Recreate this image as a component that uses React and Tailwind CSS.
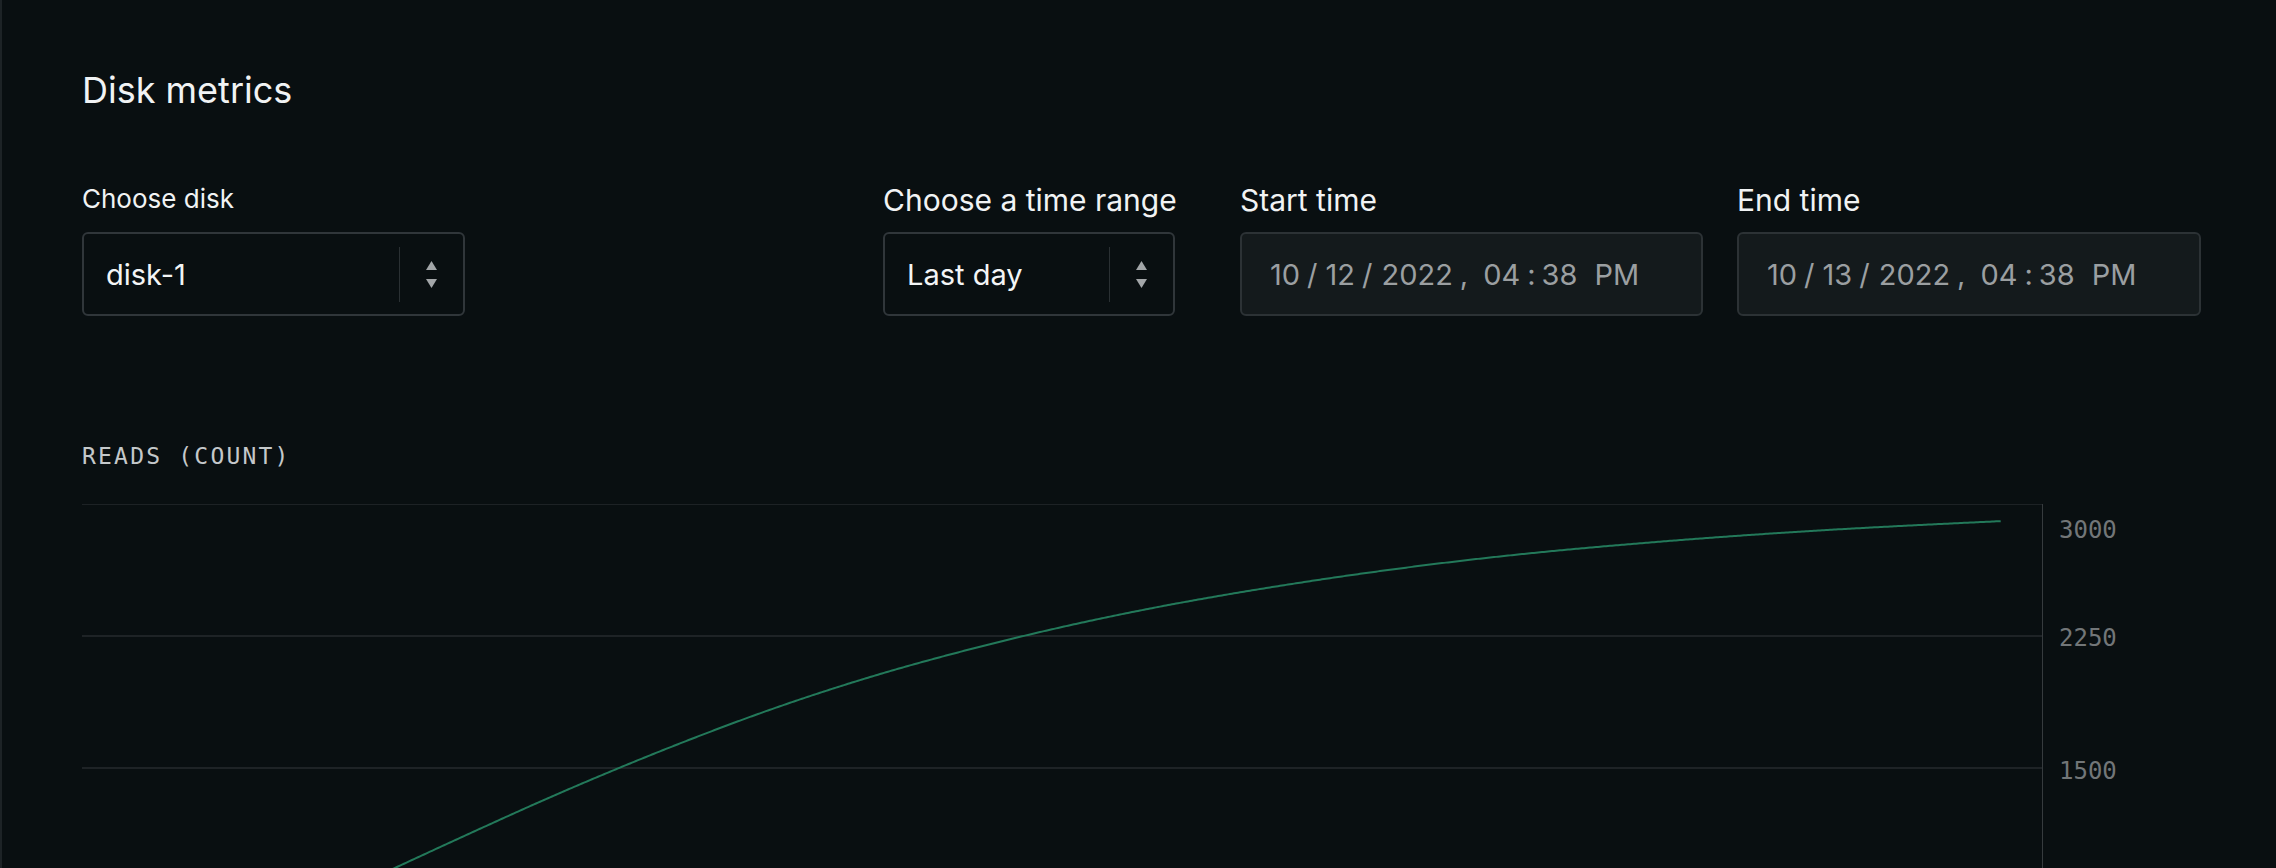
import React from "react";

// slope knots (local x, dy/dx) for the reads curve
const SLOPES = [
  [150, -0.48],
  [422, -0.454],
  [640, -0.377],
  [840, -0.275],
  [1118, -0.177],
  [1494, -0.091],
  [1802, -0.052],
  [1930, -0.045],
];

function slopeAt(x) {
  for (let i = 0; i < SLOPES.length - 1; i++) {
    const [x0, s0] = SLOPES[i];
    const [x1, s1] = SLOPES[i + 1];
    if (x <= x1) return s0 + ((x - x0) / (x1 - x0)) * (s1 - s0);
  }
  return SLOPES[SLOPES.length - 1][1];
}

function curvePath() {
  let x = 200;
  let y = 417;
  let d = `M${x},${y}`;
  const end = 1918.7;
  const step = 2;
  while (x < end) {
    const nx = Math.min(x + step, end);
    const s = (slopeAt(x) + slopeAt(nx)) / 2;
    y += s * (nx - x);
    x = nx;
    d += ` L${x.toFixed(1)},${y.toFixed(2)}`;
  }
  return d;
}

function Arrows() {
  return (
    <svg width="11" height="27" viewBox="0 0 11 27" className="shrink-0">
      <polygon points="5.5,0 11,9 0,9" fill="#a2a6a8" />
      <polygon points="0,18 11,18 5.5,27" fill="#a2a6a8" />
    </svg>
  );
}

function SelectBox({ value, className }) {
  return (
    <div
      className={
        "flex h-[84px] items-center rounded-[6px] border-2 border-[#30363a] bg-[#090f11] " +
        className
      }
    >
      <span className="flex-1 pl-[22px] text-[29px] leading-none text-[#f3f5f6]">{value}</span>
      <div className="h-[55px] w-px bg-[#2a3033]" />
      <div className="flex items-center px-[26px]">
        <Arrows />
      </div>
    </div>
  );
}

function DateBox({ parts }) {
  const [m, d, y, hh, mm, ap] = parts;
  return (
    <div className="flex h-[84px] items-center rounded-[6px] border-2 border-[#2c3235] bg-[#141a1c] pl-[28px] text-[29px] leading-none text-[#9b9fa1]">
      <span>{m}</span>
      <span className="ml-[7px]">/</span>
      <span className="ml-[8px]">{d}</span>
      <span className="ml-[7px]">/</span>
      <span className="ml-[9px]">{y}</span>
      <span className="ml-[7px]">,</span>
      <span className="ml-[15px]">{hh}</span>
      <span className="ml-[7px]">:</span>
      <span className="ml-[6px]">{mm}</span>
      <span className="ml-[17px]">{ap}</span>
    </div>
  );
}

export default function App() {
  return (
    <div className="h-[868px] w-full overflow-hidden border-l-2 border-[#1d2326] bg-[#090f11] font-['Inter',sans-serif] text-[#f1f3f4]">
      <div className="pl-[80px] pt-[72px]">
        <h1 className="text-[36px] font-normal leading-none">Disk metrics</h1>

        <div className="mt-[77px] flex items-start">
          <div className="w-[383px]">
            <div className="mt-[1px] text-[26px] leading-[26px]">Choose disk</div>
            <SelectBox value="disk-1" className="mt-[20px]" />
          </div>

          <div className="ml-[418px] w-[292px]">
            <div className="text-[30px] leading-[30px] whitespace-nowrap">Choose a time range</div>
            <SelectBox value="Last day" className="mt-[17px]" />
          </div>

          <div className="ml-[65px] w-[463px]">
            <div className="text-[30px] leading-[30px]">Start time</div>
            <div className="mt-[17px]">
              <DateBox parts={["10", "12", "2022", "04", "38", "PM"]} />
            </div>
          </div>

          <div className="ml-[34px] w-[464px]">
            <div className="text-[30px] leading-[30px]">End time</div>
            <div className="mt-[17px]">
              <DateBox parts={["10", "13", "2022", "04", "38", "PM"]} />
            </div>
          </div>
        </div>

        <div className="mt-[129px] font-['DejaVu_Sans_Mono',monospace] text-[23px] leading-none tracking-[2.2px] text-[#c4c8ca]">
          READS (COUNT)
        </div>

        <div className="mt-[36px] flex">
          <div className="relative h-[400px] w-[1961px] shrink-0 border-r border-[#363b3e]">
            <svg width="1960" height="400" viewBox="0 0 1960 400" className="block">
              <rect x="0" y="0" width="1960" height="1" fill="#1d2225" />
              <rect x="0" y="131" width="1960" height="2" fill="#1e2326" />
              <rect x="0" y="263" width="1960" height="2" fill="#1e2326" />
              <path
                d={curvePath()}
                fill="none"
                stroke="#23795a"
                strokeWidth="2"
                strokeLinejoin="round"
              />
            </svg>
          </div>
          <div className="flex flex-col pl-[16px] font-['DejaVu_Sans_Mono',monospace] text-[24px] leading-none text-[#727678]">
            <span className="mt-[14px]">3000</span>
            <span className="mt-[84px]">2250</span>
            <span className="mt-[109px]">1500</span>
          </div>
        </div>
      </div>
    </div>
  );
}
